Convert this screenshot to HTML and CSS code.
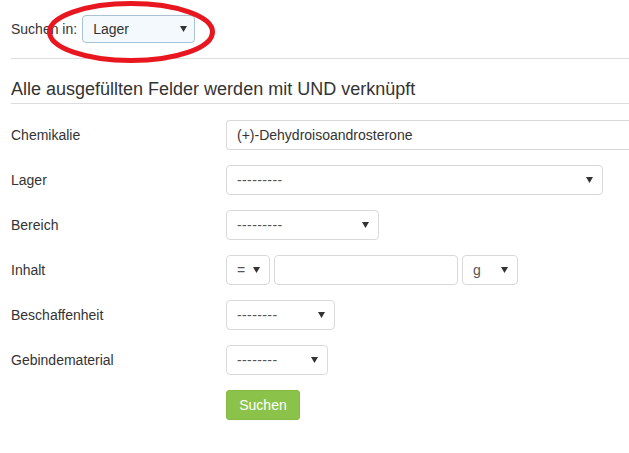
FILE: index.html
```html
<!DOCTYPE html>
<html lang="de">
<head>
<meta charset="utf-8">
<title>Suche</title>
<link rel="stylesheet" href="styles.css">
</head>
<body>
<div class="page">
  <div class="scope">
    <span class="scope-label">Suchen in:</span>
    <div class="select select-scope"><span>Lager</span><svg class="caret" width="7" height="6" viewBox="0 0 7 6"><polygon points="0,0 7,0 3.5,6" /></svg></div>
    <svg class="ring" width="176" height="66" viewBox="0 0 176 66"><ellipse cx="86" cy="32" rx="81.5" ry="28.5" /></svg>
  </div>
  <div class="rule"></div>
  <h2 class="heading">Alle ausgefüllten Felder werden mit UND verknüpft</h2>
  <div class="form">
    <div class="row"><div class="label">Chemikalie</div><div class="controls"><div class="input w-chem">(+)-Dehydroisoandrosterone</div></div></div>
    <div class="row"><div class="label">Lager</div><div class="controls"><div class="select w-lager"><span class="dash">---------</span><svg class="caret" width="7" height="6" viewBox="0 0 7 6"><polygon points="0,0 7,0 3.5,6" /></svg></div></div></div>
    <div class="row"><div class="label">Bereich</div><div class="controls"><div class="select w-bereich"><span class="dash">---------</span><svg class="caret" width="7" height="6" viewBox="0 0 7 6"><polygon points="0,0 7,0 3.5,6" /></svg></div></div></div>
    <div class="row"><div class="label">Inhalt</div><div class="controls">
      <div class="select w-op"><span>=</span><svg class="caret" width="7" height="6" viewBox="0 0 7 6"><polygon points="0,0 7,0 3.5,6" /></svg></div>
      <div class="input w-amount"></div>
      <div class="select w-unit"><span>g</span><svg class="caret" width="7" height="6" viewBox="0 0 7 6"><polygon points="0,0 7,0 3.5,6" /></svg></div>
    </div></div>
    <div class="row"><div class="label">Beschaffenheit</div><div class="controls"><div class="select w-besch"><span class="dash">--------</span><svg class="caret" width="7" height="6" viewBox="0 0 7 6"><polygon points="0,0 7,0 3.5,6" /></svg></div></div></div>
    <div class="row"><div class="label">Gebindematerial</div><div class="controls"><div class="select w-geb"><span class="dash">--------</span><svg class="caret" width="7" height="6" viewBox="0 0 7 6"><polygon points="0,0 7,0 3.5,6" /></svg></div></div></div>
    <div class="row"><div class="label"></div><div class="controls"><button class="btn">Suchen</button></div></div>
  </div>
</div>
</body>
</html>
```
FILE: styles.css
```css
html, body {
  margin: 0;
  padding: 0;
  overflow: hidden;
  background: #fff;
}
body {
  font-family: "Liberation Sans", Arial, sans-serif;
  font-size: 14px;
  color: #333;
}
.page {
  padding: 15px 0 0 11px;
}
.scope {
  position: relative;
  display: flex;
  align-items: center;
  gap: 5px;
  height: 28px;
}
.scope-label {
  color: #333;
}
.select {
  box-sizing: border-box;
  display: flex;
  align-items: center;
  justify-content: space-between;
  height: 30px;
  padding: 0 9px 0 10px;
  border: 1px solid #d9d9d9;
  border-radius: 4px;
  background: #fff;
  color: #555;
}
.select-scope {
  width: 113px;
  height: 28px;
  border-color: #a9c2d6;
  background: #f4f9fd;
  color: #333;
  padding-right: 7px;
}
.caret {
  display: block;
  fill: #333;
}
.ring {
  position: absolute;
  left: 34px;
  top: -15px;
  fill: none;
  stroke: #e8161f;
  stroke-width: 5;
}
.rule {
  height: 1px;
  background: #dddddd;
  margin-top: 15px;
}
.heading {
  margin: 20px 0 0;
  font-size: 18px;
  font-weight: normal;
  line-height: 20px;
  padding-bottom: 4px;
  border-bottom: 1px solid #dddddd;
  color: #333;
}
.form {
  display: flex;
  flex-direction: column;
  gap: 15px;
  padding-top: 16px;
}
.row {
  display: flex;
  align-items: center;
  height: 30px;
}
.label {
  width: 215px;
  flex: none;
}
.controls {
  display: flex;
  gap: 4px;
  align-items: center;
}
.input {
  box-sizing: border-box;
  height: 30px;
  display: flex;
  align-items: center;
  padding: 0 10px;
  border: 1px solid #d9d9d9;
  border-radius: 4px;
  background: #fff;
  color: #333;
}
.dash {
  letter-spacing: 0.4px;
}
.w-chem {
  width: 403px;
  border-right: 0;
  border-radius: 4px 0 0 4px;
}
.w-lager { width: 377px; }
.w-bereich { width: 153px; }
.w-op { width: 44px; }
.w-amount { width: 184px; }
.w-unit { width: 56px; }
.w-besch { width: 109px; }
.w-geb { width: 102px; }
.btn {
  box-sizing: border-box;
  height: 30px;
  width: 74px;
  border: 1px solid #85bb45;
  border-radius: 3px;
  background: #8bc34a;
  color: #fff;
  font-family: "Liberation Sans", Arial, sans-serif;
  font-size: 14px;
  padding: 0;
}
```
